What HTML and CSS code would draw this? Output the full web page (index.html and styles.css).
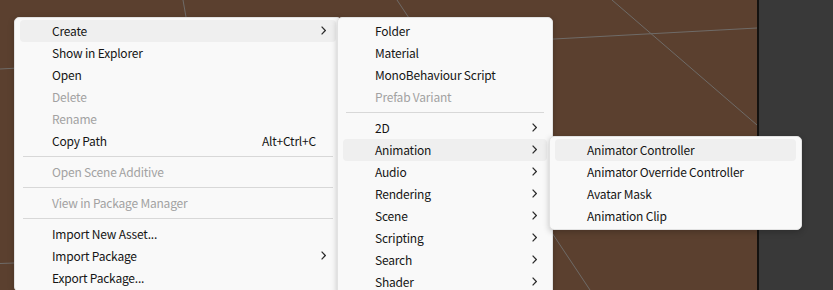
FILE: index.html
```html
<!DOCTYPE html>
<html lang="en">

<head>
    <meta charset="UTF-8">
    <title>Project Context Menu</title>
    <link rel="stylesheet" href="styles.css">
</head>

<body>
    <div class="screen">
        <div class="scene">
            <svg class="grid" width="757" height="290" viewBox="0 0 757 290">
                <line x1="183" y1="0" x2="234" y2="290" />
                <line x1="397" y1="0" x2="590" y2="290" />
                <line x1="612" y1="0" x2="757" y2="125" />
                <line x1="0" y1="69" x2="757" y2="28" />
                <line x1="0" y1="263.5" x2="14" y2="263" />
            </svg>
        </div>
        <div class="panel"></div>

        <!-- main context menu -->
        <div class="menu menu-main">
            <div class="item active"><span class="label">Create</span><span class="sub"><svg width="5" height="9"><path d="M0.6 0.6 L4.3 4.5 L0.6 8.4" /></svg></span></div>
            <div class="item"><span class="label">Show in Explorer</span><span class="sub"></span></div>
            <div class="item"><span class="label">Open</span><span class="sub"></span></div>
            <div class="item disabled"><span class="label">Delete</span><span class="sub"></span></div>
            <div class="item disabled"><span class="label">Rename</span><span class="sub"></span></div>
            <div class="item"><span class="label">Copy Path</span><span class="shortcut">Alt+Ctrl+C</span><span class="sub"></span></div>
            <div class="sep"></div>
            <div class="item disabled"><span class="label">Open Scene Additive</span><span class="sub"></span></div>
            <div class="sep"></div>
            <div class="item disabled"><span class="label">View in Package Manager</span><span class="sub"></span></div>
            <div class="sep"></div>
            <div class="item"><span class="label">Import New Asset...</span><span class="sub"></span></div>
            <div class="item"><span class="label">Import Package</span><span class="sub"><svg width="5" height="9"><path d="M0.6 0.6 L4.3 4.5 L0.6 8.4" /></svg></span></div>
            <div class="item"><span class="label">Export Package...</span><span class="sub"></span></div>
        </div>

        <!-- Create submenu -->
        <div class="menu menu-create">
            <div class="item"><span class="label">Folder</span><span class="sub"></span></div>
            <div class="item"><span class="label">Material</span><span class="sub"></span></div>
            <div class="item"><span class="label">MonoBehaviour Script</span><span class="sub"></span></div>
            <div class="item disabled"><span class="label">Prefab Variant</span><span class="sub"></span></div>
            <div class="sep"></div>
            <div class="item"><span class="label">2D</span><span class="sub"><svg width="5" height="9"><path d="M0.6 0.6 L4.3 4.5 L0.6 8.4" /></svg></span></div>
            <div class="item active"><span class="label">Animation</span><span class="sub"><svg width="5" height="9"><path d="M0.6 0.6 L4.3 4.5 L0.6 8.4" /></svg></span></div>
            <div class="item"><span class="label">Audio</span><span class="sub"><svg width="5" height="9"><path d="M0.6 0.6 L4.3 4.5 L0.6 8.4" /></svg></span></div>
            <div class="item"><span class="label">Rendering</span><span class="sub"><svg width="5" height="9"><path d="M0.6 0.6 L4.3 4.5 L0.6 8.4" /></svg></span></div>
            <div class="item"><span class="label">Scene</span><span class="sub"><svg width="5" height="9"><path d="M0.6 0.6 L4.3 4.5 L0.6 8.4" /></svg></span></div>
            <div class="item"><span class="label">Scripting</span><span class="sub"><svg width="5" height="9"><path d="M0.6 0.6 L4.3 4.5 L0.6 8.4" /></svg></span></div>
            <div class="item"><span class="label">Search</span><span class="sub"><svg width="5" height="9"><path d="M0.6 0.6 L4.3 4.5 L0.6 8.4" /></svg></span></div>
            <div class="item"><span class="label">Shader</span><span class="sub"><svg width="5" height="9"><path d="M0.6 0.6 L4.3 4.5 L0.6 8.4" /></svg></span></div>
        </div>

        <!-- Animation submenu -->
        <div class="menu menu-anim">
            <div class="item active"><span class="label">Animator Controller</span><span class="sub"></span></div>
            <div class="item"><span class="label">Animator Override Controller</span><span class="sub"></span></div>
            <div class="item"><span class="label">Avatar Mask</span><span class="sub"></span></div>
            <div class="item"><span class="label">Animation Clip</span><span class="sub"></span></div>
        </div>
    </div>
</body>

</html>
```

FILE: styles.css
```css
* {
    box-sizing: border-box;
}

body {
    margin: 0;
    font-family: "Noto Sans CJK KR", "Noto Sans", sans-serif;
    font-size: 12px;
    letter-spacing: -0.2px;
    overflow: hidden;
}

.screen {
    position: relative;
    display: flex;
    width: 833px;
    height: 290px;
    overflow: hidden;
}

.scene {
    width: 757px;
    height: 290px;
    background-color: #5b402f;
}

.grid {
    display: block;
}

.grid line {
    stroke: #6f6b68;
    stroke-width: 1;
}

.panel {
    flex: 1;
    background-color: #393939;
    border-left: 2px solid #141210;
}

.menu {
    position: absolute;
    padding: 2px 5px;
    background-color: #f9f9f9;
    border: 1px solid #e2e2e2;
    border-radius: 5px;
    box-shadow: 0 2px 6px rgba(0, 0, 0, 0.22);
    color: #151515;
}

.menu-main {
    left: 14px;
    top: 17px;
    width: 328px;
}

.menu-create {
    left: 337px;
    top: 17px;
    width: 216px;
}

.menu-anim {
    left: 549px;
    top: 136px;
    width: 253px;
}

.item {
    display: flex;
    align-items: center;
    height: 22px;
    padding-left: 32px;
    padding-bottom: 2px;
    border-radius: 4px;
    white-space: nowrap;
}

.item.active {
    background-color: #efefef;
}

.item.disabled {
    color: #a2a2a2;
}

.label {
    flex: 1;
}

.shortcut {
    margin-left: 10px;
}

.sub {
    width: 20px;
    height: 20px;
    display: flex;
    align-items: center;
    justify-content: flex-end;
    padding-right: 10px;
}

.sub svg {
    display: block;
}

.sub path {
    fill: none;
    stroke: #2a2a2a;
    stroke-width: 1.2;
}

.sep {
    height: 1px;
    margin: 4px 3px;
    background-color: #d8d8d8;
}
```
